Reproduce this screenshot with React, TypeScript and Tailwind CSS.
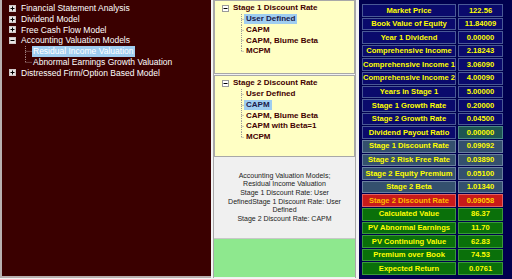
const sans = { fontFamily: '"Liberation Sans", Arial, sans-serif' };

function Expander({ open, dark }: { open: boolean; dark?: boolean }) {
  return (
    <svg width="7" height="7" viewBox="0 0 7 7" className="shrink-0">
      <rect x="0.5" y="0.5" width="6" height="6" fill={dark ? '#e8e4e4' : '#ffffff'} stroke={dark ? '#d0c8c8' : '#9a9a9a'} />
      <line x1="1.5" y1="3.5" x2="5.5" y2="3.5" stroke="#000" />
      {!open && <line x1="3.5" y1="1.5" x2="3.5" y2="5.5" stroke="#000" />}
    </svg>
  );
}

function Branch({ last, w, color }: { last?: boolean; w: number; color: string }) {
  return (
    <svg width={w} height="100%" className="shrink-0 h-full">
      <line x1="0.5" y1="0" x2="0.5" y2={last ? '50%' : '100%'} stroke={color} strokeDasharray="1 1" />
      <line x1="0.5" y1="50%" x2={w} y2="50%" stroke={color} strokeDasharray="1 1" />
    </svg>
  );
}

const leftTree: { label: string; open?: boolean; children?: string[] }[] = [
  { label: 'Financial Statement Analysis' },
  { label: 'Dividend Model' },
  { label: 'Free Cash Flow Model' },
  { label: 'Accounting Valuation Models', open: true, children: ['Residual Income Valuation', 'Abnormal Earnings Growth Valuation'] },
  { label: 'Distressed Firm/Option Based Model' },
];

function LeftPanel() {
  return (
    <div className="w-[211px] h-[278px] bg-[#3a0000] border-l-2 border-b-2 border-[#b8b0b0] pt-[3px] pl-[7px] text-white text-[8.5px] leading-none" style={sans}>
      {leftTree.map((n) => (
        <div key={n.label}>
          <div className="flex items-center h-[10.75px]">
            <Expander open={!!n.open} dark />
            <span className="ml-[5px] whitespace-nowrap">{n.label}</span>
          </div>
          {n.children?.map((c, i) => (
            <div key={c} className="flex items-center h-[10.75px] pl-[16px]">
              <Branch w={7} last={i === n.children!.length - 1} color="#a08080" />
              <span className={'whitespace-nowrap px-[1px] py-[1px] ' + (i === 0 ? 'bg-[#9fcdf0]' : '')}>{c}</span>
            </div>
          ))}
        </div>
      ))}
    </div>
  );
}

function RateTree({ title, items, selected, className }: { title: string; items: string[]; selected: string; className: string }) {
  return (
    <div className={'bg-[#ffffc4] border border-[#a8a8a8] pt-[2px] pl-[7px] text-[8px] font-bold text-[#420000] leading-none ' + className} style={sans}>
      <div className="flex items-center h-[10.75px]">
        <Expander open />
        <span className="ml-[4px] whitespace-nowrap">{title}</span>
      </div>
      {items.map((it, i) => (
        <div key={it} className="flex items-center h-[10.75px] pl-[19px]">
          <Branch w={3} last={i === items.length - 1} color="#9a9a9a" />
          <span className={'whitespace-nowrap px-[2px] py-[1px] ' + (it === selected ? 'bg-[#9fcdf0] text-[#1a1a4a]' : '')}>{it}</span>
        </div>
      ))}
    </div>
  );
}

function MiddlePanel() {
  return (
    <div className="w-[143px] h-[278px] ml-[2px] flex flex-col bg-[#f0f0f0] border-l border-r border-[#a8a8a8]">
      <RateTree
        className="h-[74px]"
        title="Stage 1 Discount Rate"
        items={['User Defined', 'CAPM', 'CAPM, Blume Beta', 'MCPM']}
        selected="User Defined"
      />
      <RateTree
        className="h-[82px] mt-[1px]"
        title="Stage 2 Discount Rate"
        items={['User Defined', 'CAPM', 'CAPM, Blume Beta', 'CAPM with Beta=1', 'MCPM']}
        selected="CAPM"
      />
      <div className="h-[81px] flex flex-col items-center justify-center text-[7px] leading-[8.6px] text-[#222]" style={sans}>
        <div className="whitespace-nowrap">Accounting Valuation Models;</div>
        <div className="whitespace-nowrap">Residual Income Valuation</div>
        <div className="whitespace-nowrap">Stage 1 Discount Rate: User</div>
        <div className="whitespace-nowrap">DefinedStage 1 Discount Rate: User</div>
        <div className="whitespace-nowrap">Defined</div>
        <div className="whitespace-nowrap">Stage 2 Discount Rate: CAPM</div>
      </div>
      <div className="h-[39px] bg-[#8ee88e] border-t border-[#c8c8c8]" />
    </div>
  );
}

type Row = { label: string; value: string; kind: 'navy' | 'teal' | 'steel' | 'red' | 'green' };

const rows: Row[] = [
  { label: 'Market Price', value: '122.56', kind: 'navy' },
  { label: 'Book Value of Equity', value: '11.84009', kind: 'navy' },
  { label: 'Year 1 Dividend', value: '0.00000', kind: 'navy' },
  { label: 'Comprehensive Income', value: '2.18243', kind: 'navy' },
  { label: 'Comprehensive Income 1', value: '3.06090', kind: 'navy' },
  { label: 'Comprehensive Income 2', value: '4.00090', kind: 'navy' },
  { label: 'Years in Stage 1', value: '5.00000', kind: 'navy' },
  { label: 'Stage 1 Growth Rate', value: '0.20000', kind: 'navy' },
  { label: 'Stage 2 Growth Rate', value: '0.04500', kind: 'navy' },
  { label: 'Dividend Payout Ratio', value: '0.00000', kind: 'teal' },
  { label: 'Stage 1 Discount Rate', value: '0.09092', kind: 'steel' },
  { label: 'Stage 2 Risk Free Rate', value: '0.03890', kind: 'steel' },
  { label: 'Stage 2 Equity Premium', value: '0.05100', kind: 'steel' },
  { label: 'Stage 2 Beta', value: '1.01340', kind: 'steel' },
  { label: 'Stage 2 Discount Rate', value: '0.09058', kind: 'red' },
  { label: 'Calculated Value', value: '86.37', kind: 'green' },
  { label: 'PV Abnormal Earnings', value: '11.70', kind: 'green' },
  { label: 'PV Continuing Value', value: '62.83', kind: 'green' },
  { label: 'Premium over Book', value: '74.53', kind: 'green' },
  { label: 'Expected Return', value: '0.0761', kind: 'green' },
];

const labelBg: Record<Row['kind'], string> = {
  navy: 'bg-[#0a0a6c] border-[#4a5a96] text-[#ffff00]',
  teal: 'bg-[#0a0a6c] border-[#4a5a96] text-[#ffff00]',
  steel: 'bg-[#34506e] border-[#6a80a0] text-[#ffff00]',
  red: 'bg-[#c81a1a] border-[#e06060] text-[#ffb800]',
  green: 'bg-[#0a700a] border-[#3a9a3a] text-[#ffff00]',
};

const valueBg: Record<Row['kind'], string> = {
  navy: 'bg-[#0a0a6c] border-[#4a5a96] text-[#ffff00]',
  teal: 'bg-[#1e5552] border-[#4a8a86] text-[#ffff00]',
  steel: 'bg-[#34506e] border-[#6a80a0] text-[#ffff00]',
  red: 'bg-[#c81a1a] border-[#e06060] text-[#ffd000]',
  green: 'bg-[#0a700a] border-[#3a9a3a] text-[#ffff00]',
};

function RightPanel() {
  return (
    <div className="flex-1 h-[279px] ml-[3px] bg-[#00004e] pt-[4px] pl-[3px]" style={sans}>
      <div className="grid grid-cols-[94px_45px] gap-x-[2px] gap-y-[1px] text-[7.6px] font-bold leading-none">
        {rows.map((r) => (
          <div key={r.label} className="contents">
            <div className={'h-[12.6px] border flex items-center justify-center whitespace-nowrap ' + labelBg[r.kind]}>{r.label}</div>
            <div className={'h-[12.6px] border flex items-center justify-center whitespace-nowrap ' + valueBg[r.kind]}>{r.value}</div>
          </div>
        ))}
      </div>
    </div>
  );
}

export default function App() {
  return (
    <div className="w-[512px] h-[279px] flex bg-[#f4f4f4] overflow-hidden">
      <LeftPanel />
      <MiddlePanel />
      <RightPanel />
    </div>
  );
}
